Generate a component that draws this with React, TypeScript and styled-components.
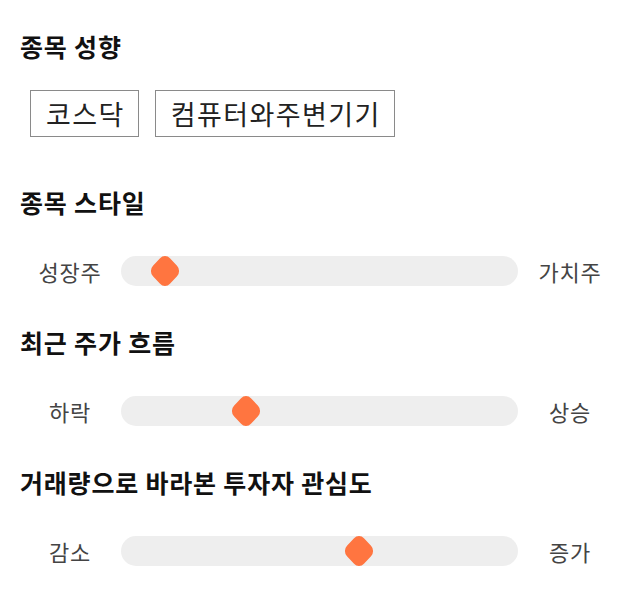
import React from "react";
import styled, { createGlobalStyle } from "styled-components";

const GlobalStyle = createGlobalStyle`
  html, body {
    margin: 0;
    padding: 0;
    background: #ffffff;
  }
  body {
    font-family: "Noto Sans CJK KR", "Noto Sans", sans-serif;
    color: #111111;
  }
`;

const Page = styled.main`
  width: 600px;
  padding: 30px 20px 20px;
  display: flex;
  flex-direction: column;
`;

const Section = styled.section<{ $gapAfter: number }>`
  display: flex;
  flex-direction: column;
  margin-bottom: ${(p) => p.$gapAfter}px;
`;

const Title = styled.h2`
  margin: 0;
  height: 32px;
  line-height: 32px;
  font-size: 25px;
  font-weight: 700;
  color: #111111;
  letter-spacing: 0.8px;
  white-space: nowrap;
`;

const ChipGroup = styled.div`
  display: flex;
  gap: 16px;
  margin: 28px 0 0 10px;
`;

const Chip = styled.button`
  height: 47px;
  padding: 0 13px 0 15px;
  border: 1px solid #8a8a8a;
  background: #ffffff;
  font-family: inherit;
  font-size: 27px;
  font-weight: 400;
  letter-spacing: 1.4px;
  color: #222222;
  line-height: 45px;
  white-space: nowrap;
  cursor: pointer;
`;

const SliderRow = styled.div`
  display: grid;
  grid-template-columns: 100px 1fr 100px;
  align-items: center;
  height: 30px;
  margin-top: 38px;
`;

const EndLabel = styled.span`
  text-align: center;
  font-size: 22px;
  letter-spacing: 0.8px;
  color: #444444;
  line-height: 30px;
`;

const Track = styled.div`
  position: relative;
  height: 30px;
  margin: 0 2px 0 1px;
  border-radius: 15px;
  background: #eeeeee;
`;

const Thumb = styled.div`
  position: absolute;
  top: 50%;
  width: 24px;
  height: 24px;
  border-radius: 7px;
  background: #ff7540;
  transform: translate(-50%, -50%) scaleY(1.07) rotate(45deg);
`;

type SliderData = {
  title: string;
  left: string;
  right: string;
  position: number;
};

const sliders: SliderData[] = [
  { title: "종목 스타일", left: "성장주", right: "가치주", position: 11.2 },
  { title: "최근 주가 흐름", left: "하락", right: "상승", position: 31.4 },
  { title: "거래량으로 바라본 투자자 관심도", left: "감소", right: "증가", position: 60 },
];

export default function App() {
  return (
    <>
      <GlobalStyle />
      <Page>
        <Section $gapAfter={49}>
          <Title>종목 성향</Title>
          <ChipGroup>
            <Chip>코스닥</Chip>
            <Chip>컴퓨터와주변기기</Chip>
          </ChipGroup>
        </Section>
        {sliders.map((s) => (
          <Section key={s.title} $gapAfter={40}>
            <Title>{s.title}</Title>
            <SliderRow>
              <EndLabel>{s.left}</EndLabel>
              <Track>
                <Thumb style={{ left: `${s.position}%` }} />
              </Track>
              <EndLabel>{s.right}</EndLabel>
            </SliderRow>
          </Section>
        ))}
      </Page>
    </>
  );
}
